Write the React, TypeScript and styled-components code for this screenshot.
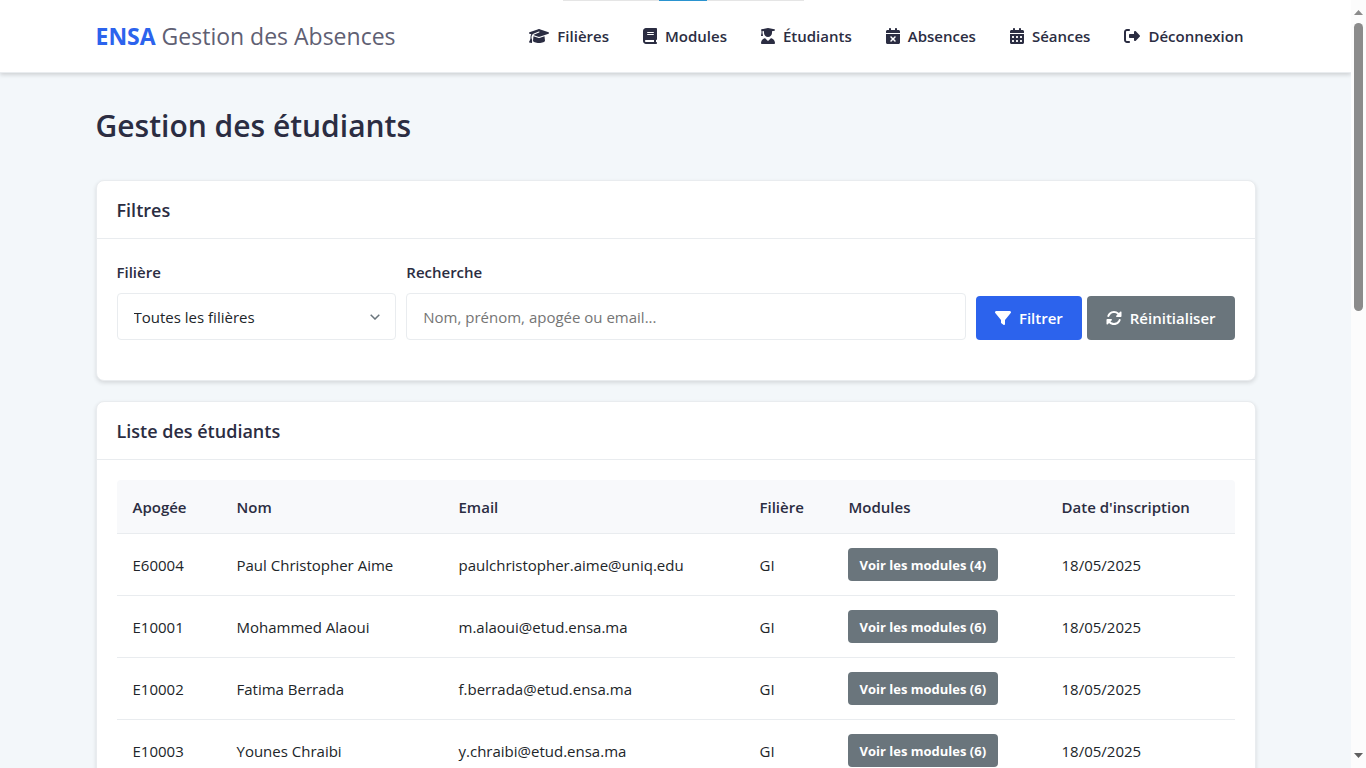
import React from "react";
import styled, { createGlobalStyle } from "styled-components";
import {
  FaGraduationCap,
  FaBook,
  FaUserGraduate,
  FaCalendarXmark,
  FaCalendarDays,
  FaRightFromBracket,
  FaFilter,
  FaRotate,
} from "react-icons/fa6";

const GlobalStyle = createGlobalStyle`
  *, *::before, *::after { box-sizing: border-box; }
  body {
    margin: 0;
    font-family: "Segoe UI", "Open Sans", "Noto Sans", sans-serif;
    font-size: 15px;
    line-height: 24px;
    color: #212529;
    background: #f3f7fa;
  }
  button, input, select { font: inherit; }
`;

const Viewport = styled.div`
  display: grid;
  grid-template-columns: minmax(0, 1fr) 15px;
  height: 100vh;
`;

const ScrollPane = styled.div`
  position: relative;
  overflow-y: auto;
  scrollbar-width: none;
`;

const ScrollTrack = styled.div`
  display: flex;
  flex-direction: column;
  align-items: center;
  padding: 10px 0 10px;
  background: #fcfcfc;
`;

const ScrollThumb = styled.div`
  width: 9px;
  height: 288px;
  margin: 8px 0 auto;
  border-radius: 5px;
  background: #8b8b8b;
`;

const LoadingBar = styled.div`
  position: absolute;
  z-index: 2;
  top: 0;
  left: 50%;
  width: 241px;
  height: 1px;
  margin-left: -113px;
  padding-left: 96px;
  background: #e5e5e5;

  &::before {
    content: "";
    display: block;
    width: 48px;
    height: 1px;
    background: #2a93cf;
  }
`;

const Container = styled.div`
  max-width: 1200px;
  margin: 0 auto;
  padding: 0 20px;
`;

const Header = styled.header`
  position: relative;
  background: #fff;
  border-bottom: 1px solid #e9ecef;
  box-shadow: 0 2px 4px rgba(0, 0, 0, 0.15);
`;

const HeaderInner = styled(Container)`
  display: flex;
  align-items: center;
  justify-content: space-between;
  height: 72px;
`;

const Brand = styled.a`
  font-size: 23px;
  line-height: 36px;
  color: #5f6073;
  text-decoration: none;
`;

const BrandMark = styled.span`
  font-weight: 700;
  color: #2c63ed;
`;

const Nav = styled.nav`
  display: flex;
  gap: 10px;
`;

const NavLink = styled.a<{ $iconWidth: number }>`
  display: flex;
  align-items: center;
  gap: 8px;
  padding: 8px 12px;
  font-weight: 600;
  color: #2b2d42;
  text-decoration: none;

  svg {
    flex: none;
    width: ${(p) => p.$iconWidth}px;
    height: 16px;
  }
`;

const PageTitle = styled.h1`
  margin: 28px 0 29px;
  font-size: 30px;
  line-height: 50px;
  font-weight: 600;
  color: #2b2d42;
`;

const Card = styled.section`
  margin-bottom: 20px;
  border: 1px solid #e9ecef;
  border-radius: 8px;
  background: #fff;
  box-shadow: 0 2px 4px rgba(0, 0, 0, 0.12);
`;

const CardTitle = styled.h2`
  margin: 0;
  padding: 15px 20px 14px;
  border-bottom: 1px solid #e9ecef;
  font-size: 18px;
  line-height: 28px;
  font-weight: 600;
  color: #2b2d42;
`;

const CardBody = styled.div`
  padding: 20px;
`;

const Filters = styled.form`
  display: grid;
  grid-template-columns: minmax(0, 1fr) minmax(0, 2fr) auto;
  gap: 10px;
  align-items: end;
  padding-bottom: 20px;
`;

const Field = styled.div`
  display: flex;
  flex-direction: column;
  gap: 8px;
`;

const Label = styled.label`
  line-height: 26px;
  font-weight: 600;
  color: #2b2d42;
`;

const SelectWrap = styled.div`
  display: grid;
  align-items: center;

  > * { grid-area: 1 / 1; }
  > svg { justify-self: end; margin-right: 16px; pointer-events: none; }
`;

const Select = styled.select`
  appearance: none;
  width: 100%;
  height: 47px;
  padding: 0 16px;
  border: 1px solid #e9ecef;
  border-radius: 4px;
  background: #fff;
  color: #212529;
`;

const Input = styled.input`
  width: 100%;
  height: 47px;
  padding: 0 16px;
  border: 1px solid #e9ecef;
  border-radius: 4px;
  background: #fff;
  color: #212529;

  &::placeholder { color: #757575; }
`;

const Actions = styled.div`
  display: flex;
  gap: 5px;
`;

const Button = styled.button<{ $primary?: boolean; $small?: boolean }>`
  display: inline-flex;
  align-items: center;
  justify-content: center;
  gap: 8px;
  height: ${(p) => (p.$small ? 33 : 44)}px;
  padding: 0 ${(p) => (p.$small ? 12 : 19)}px;
  border: 0;
  border-radius: 4px;
  background: ${(p) => (p.$primary ? "#2c63ed" : "#6a757c")};
  color: #fff;
  font-size: ${(p) => (p.$small ? 13 : 15)}px;
  font-weight: ${(p) => (p.$small ? 700 : 600)};
  white-space: nowrap;

  svg { width: 16px; height: 16px; }
`;

const Table = styled.table`
  width: 100%;
  table-layout: fixed;
  border-collapse: separate;
  border-spacing: 0;
`;

const Col = styled.col<{ $w: number }>`
  width: ${(p) => p.$w}px;
`;

const Th = styled.th`
  height: 54px;
  padding: 0 16px;
  border-bottom: 1px solid #e9ecef;
  background: #f8f9fb;
  text-align: left;
  font-weight: 600;
  color: #2b2d42;

  &:first-child { border-top-left-radius: 4px; }
  &:last-child { border-top-right-radius: 4px; }
`;

const Td = styled.td`
  height: 62px;
  padding: 0 16px;
  border-bottom: 1px solid #e9ecef;
  vertical-align: middle;
`;

const ButtonCell = styled(Td)`
  padding: 0 15px;
  line-height: 0;
`;

const links = [
  { label: "Filières", Icon: FaGraduationCap, iconWidth: 20 },
  { label: "Modules", Icon: FaBook, iconWidth: 14 },
  { label: "Étudiants", Icon: FaUserGraduate, iconWidth: 14 },
  { label: "Absences", Icon: FaCalendarXmark, iconWidth: 14 },
  { label: "Séances", Icon: FaCalendarDays, iconWidth: 14 },
  { label: "Déconnexion", Icon: FaRightFromBracket, iconWidth: 16 },
];

const columns = [
  { label: "Apogée", width: 104 },
  { label: "Nom", width: 222 },
  { label: "Email", width: 301 },
  { label: "Filière", width: 89 },
  { label: "Modules", width: 213 },
  { label: "Date d'inscription", width: 189 },
];

const students = [
  { id: "E60004", name: "Paul Christopher Aime", email: "paulchristopher.aime@uniq.edu", modules: 4 },
  { id: "E10001", name: "Mohammed Alaoui", email: "m.alaoui@etud.ensa.ma", modules: 6 },
  { id: "E10002", name: "Fatima Berrada", email: "f.berrada@etud.ensa.ma", modules: 6 },
  { id: "E10003", name: "Younes Chraibi", email: "y.chraibi@etud.ensa.ma", modules: 6 },
];

export default function App() {
  return (
    <>
      <GlobalStyle />
      <Viewport>
        <ScrollPane>
          <LoadingBar />
          <Header>
            <HeaderInner>
              <Brand href="#">
                <BrandMark>ENSA</BrandMark> Gestion des Absences
              </Brand>
              <Nav>
                {links.map(({ label, Icon, iconWidth }) => (
                  <NavLink key={label} href="#" $iconWidth={iconWidth}>
                    <Icon aria-hidden />
                    {label}
                  </NavLink>
                ))}
              </Nav>
            </HeaderInner>
          </Header>
          <Container as="main">
            <PageTitle>Gestion des étudiants</PageTitle>
            <Card>
              <CardTitle>Filtres</CardTitle>
              <CardBody>
                <Filters onSubmit={(e) => e.preventDefault()}>
                  <Field>
                    <Label htmlFor="filiere">Filière</Label>
                    <SelectWrap>
                      <Select id="filiere">
                        <option>Toutes les filières</option>
                        <option>GI</option>
                      </Select>
                      <svg width="10" height="6" viewBox="0 0 10 6" fill="none" stroke="#6a757c" strokeWidth="1.5" aria-hidden>
                        <path d="M0.7 0.7L5 5L9.3 0.7" />
                      </svg>
                    </SelectWrap>
                  </Field>
                  <Field>
                    <Label htmlFor="recherche">Recherche</Label>
                    <Input id="recherche" type="text" placeholder="Nom, prénom, apogée ou email..." />
                  </Field>
                  <Actions>
                    <Button type="submit" $primary>
                      <FaFilter aria-hidden />
                      Filtrer
                    </Button>
                    <Button type="reset">
                      <FaRotate aria-hidden />
                      Réinitialiser
                    </Button>
                  </Actions>
                </Filters>
              </CardBody>
            </Card>
            <Card>
              <CardTitle>Liste des étudiants</CardTitle>
              <CardBody>
                <Table>
                  <colgroup>
                    {columns.map((c) => (
                      <Col key={c.label} $w={c.width} />
                    ))}
                  </colgroup>
                  <thead>
                    <tr>
                      {columns.map((c) => (
                        <Th key={c.label} scope="col">{c.label}</Th>
                      ))}
                    </tr>
                  </thead>
                  <tbody>
                    {students.map((s) => (
                      <tr key={s.id}>
                        <Td>{s.id}</Td>
                        <Td>{s.name}</Td>
                        <Td>{s.email}</Td>
                        <Td>GI</Td>
                        <ButtonCell>
                          <Button type="button" $small>Voir les modules ({s.modules})</Button>
                        </ButtonCell>
                        <Td>18/05/2025</Td>
                      </tr>
                    ))}
                  </tbody>
                </Table>
              </CardBody>
            </Card>
          </Container>
        </ScrollPane>
        <ScrollTrack aria-hidden>
          <svg width="9" height="5" viewBox="0 0 9 5" fill="#8b8b8b">
            <path d="M0 5L4.5 0L9 5Z" />
          </svg>
          <ScrollThumb />
          <svg width="9" height="5" viewBox="0 0 9 5" fill="#606060">
            <path d="M0 0L4.5 5L9 0Z" />
          </svg>
        </ScrollTrack>
      </Viewport>
    </>
  );
}
